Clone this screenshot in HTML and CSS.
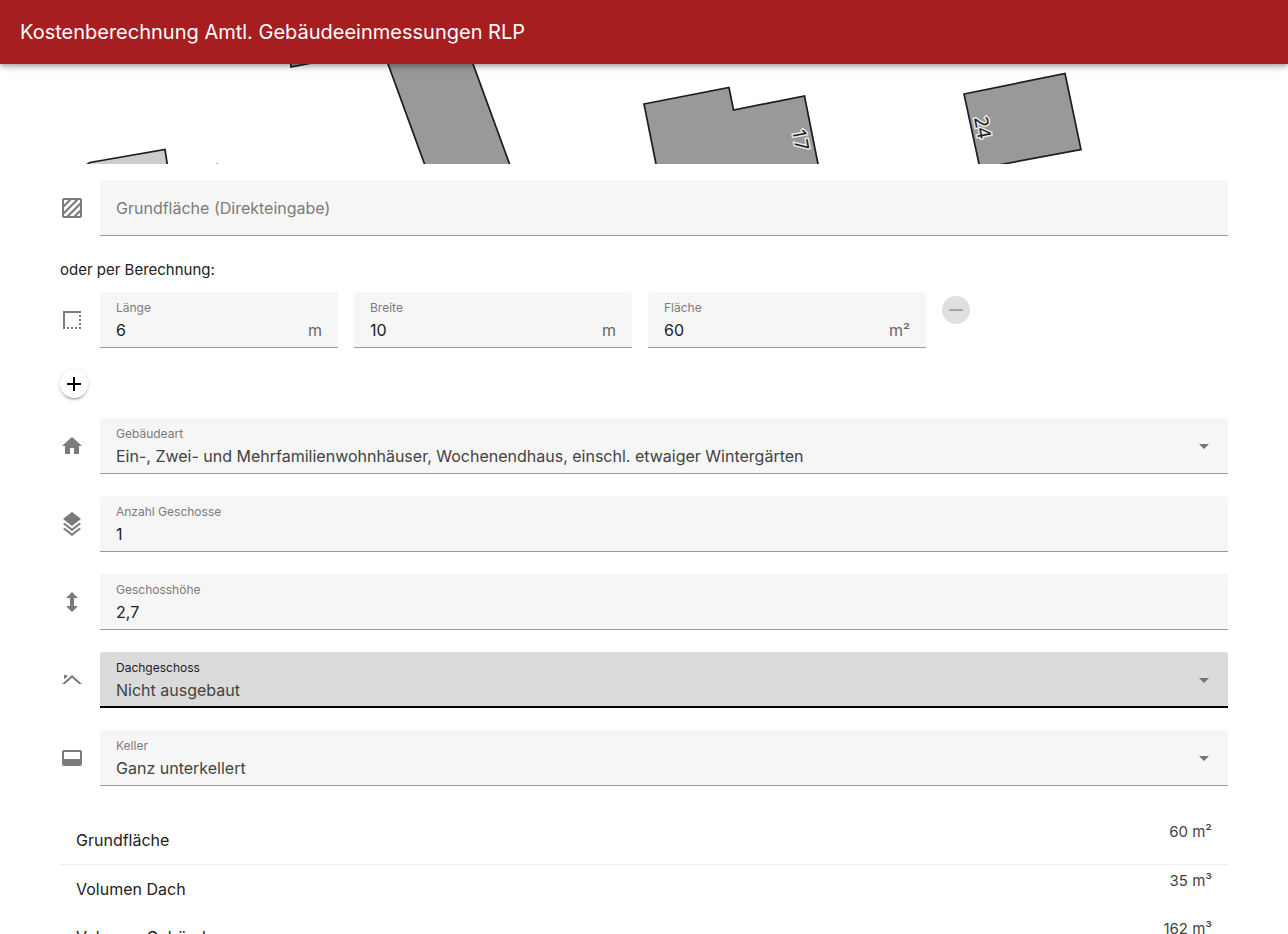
FILE: index.html
```html
<!DOCTYPE html>
<html lang="de">
<head>
<meta charset="utf-8">
<meta name="viewport" content="width=device-width, initial-scale=1">
<title>Kostenberechnung Amtl. Gebäudeeinmessungen RLP</title>
<link rel="stylesheet" href="styles.css">
</head>
<body>
<div class="app">
<header class="app-bar"><h1 class="app-title">Kostenberechnung Amtl. Gebäudeeinmessungen RLP</h1></header>
<main class="content">
  <svg class="map" viewBox="0 0 1168 100" preserveAspectRatio="xMinYMin slice" role="img" aria-label="Lageplan">
    <g fill="#999" stroke="#1c1c1c" stroke-width="1.7">
      <path d="M230-10 231 3 262-3V-10Z"/>
      <path d="M324-11 366 104H451L409-11Z"/>
      <path d="M584 40 669 23.500 673.500 46 744.500 32 759 105H597Z"/>
      <path d="M904 30 1005 9.500 1021 85.500 920 104.500Z"/>
      <path fill="#ccc" d="M20 105 30 98.500 105 85.500 108 105H20Z"/>
    </g>
    <path d="M156 99.500h2" stroke="#aaa"/>
    <g class="map-label">
      <text transform="translate(732 66) rotate(79)">17</text>
      <text transform="translate(914 54) rotate(79)">24</text>
    </g>
  </svg>
  <form class="form">
    <div class="row">
      <svg class="icon" viewBox="0 0 24 24" aria-hidden="true"><path d="M4 2C2.900 2 2 2.900 2 4V20C2 21.110 2.900 22 4 22H20C21.110 22 22 21.110 22 20V4C22 2.900 21.110 2 20 2H4M4 4H8.500L4 8.500V4M11.500 4H15.500L4 15.500V11.500L11.500 4M18.500 4H20V6.500L6.500 20H4V18.500L18.500 4M20 9.500V13.500L13.500 20H9.500L20 9.500M20 16.500V20H16.500L20 16.500Z"/></svg>
      <div class="field"><input class="control control-plain" type="text" aria-label="Grundfläche (Direkteingabe)" placeholder="Grundfläche (Direkteingabe)"></div>
    </div>
    <p class="hint">oder per Berechnung:</p>
    <div class="dimensions">
      <div class="row">
        <svg class="icon" viewBox="0 0 24 24" aria-hidden="true"><path d="M15 21H17V19H15M19 21H21V19H19M7 21H9V19H7M11 21H13V19H11M19 17H21V15H19M19 13H21V11H19M3 3V21H5V5H21V3M19 9H21V7H19"/></svg>
        <div class="field"><label class="label" for="laenge">Länge</label><input class="control" id="laenge" type="text" value="6"><span class="unit">m</span></div>
      </div>
      <div class="field"><label class="label" for="breite">Breite</label><input class="control" id="breite" type="text" value="10"><span class="unit">m</span></div>
      <div class="field"><label class="label" for="flaeche">Fläche</label><input class="control" id="flaeche" type="text" value="60" readonly><span class="unit">m²</span></div>
      <button class="fab fab-disabled" type="button" aria-label="Entfernen" disabled><svg viewBox="0 0 24 24" aria-hidden="true"><path d="M19 13H5V11H19V13Z"/></svg></button>
    </div>
    <button class="fab fab-add" type="button" aria-label="Hinzufügen"><svg viewBox="0 0 24 24" aria-hidden="true"><path d="M19 13H13V19H11V13H5V11H11V5H13V11H19V13Z"/></svg></button>
    <div class="row">
      <svg class="icon" viewBox="0 0 24 24" aria-hidden="true"><path d="M10 20V14H14V20H19V12H22L12 3L2 12H5V20H10Z"/></svg>
      <div class="field field-select"><label class="label" for="art">Gebäudeart</label><select class="control" id="art"><option>Ein-, Zwei- und Mehrfamilienwohnhäuser, Wochenendhaus, einschl. etwaiger Wintergärten</option></select></div>
    </div>
    <div class="row">
      <svg class="icon" viewBox="0 0 24 24" aria-hidden="true"><path d="M12 0L3 7L4.630 8.270L12 14L19.360 8.270L21 7L12 0M19.370 10.730L12 16.470L4.620 10.740L3 12L12 19L21 12L19.370 10.730M19.370 15.730L12 21.470L4.620 15.740L3 17L12 24L21 17L19.370 15.730Z"/></svg>
      <div class="field"><label class="label" for="geschosse">Anzahl Geschosse</label><input class="control" id="geschosse" type="text" value="1"></div>
    </div>
    <div class="row">
      <svg class="icon" viewBox="0 0 24 24" aria-hidden="true"><path d="M12 2L6 8H10V16H6L12 22L18 16H14V8H18L12 2Z"/></svg>
      <div class="field"><label class="label" for="hoehe">Geschosshöhe</label><input class="control" id="hoehe" type="text" value="2,7"></div>
    </div>
    <div class="row">
      <svg class="icon" viewBox="0 0 24 24" aria-hidden="true"><path d="M19 16H22L12 7L2 16H5L12 9.690L19 16M7 8.810V7H4V11.500L7 8.810Z"/></svg>
      <div class="field field-select field-active"><label class="label" for="dach">Dachgeschoss</label><select class="control" id="dach"><option>Nicht ausgebaut</option></select></div>
    </div>
    <div class="row">
      <svg class="icon" viewBox="0 0 24 24" aria-hidden="true"><path d="M20 4H4A2 2 0 0 0 2 6V18A2 2 0 0 0 4 20H20A2 2 0 0 0 22 18V6A2 2 0 0 0 20 4M20 13H4V6H20V13Z"/></svg>
      <div class="field field-select"><label class="label" for="keller">Keller</label><select class="control" id="keller"><option>Ganz unterkellert</option></select></div>
    </div>
  </form>
  <dl class="results">
    <div class="result"><dt>Grundfläche</dt><dd>60 m²</dd></div>
    <div class="result result-divided"><dt>Volumen Dach</dt><dd>35 m³</dd></div>
    <div class="result"><dt>Volumen Gebäude</dt><dd>162 m³</dd></div>
  </dl>
</main>
</div>
</body>
</html>
```
FILE: styles.css
```css
* { box-sizing: border-box; }
body { margin: 0; background: #fff; color: #212121; font: 16px/24px Inter, "Liberation Sans", sans-serif; }
.app { display: flex; flex-direction: column; height: 100vh; overflow: hidden; }
.app-bar { position: relative; z-index: 1; display: flex; flex: none; align-items: center; height: 64px; padding: 0 20px; background: #a61e20; color: #fff; box-shadow: 0 2px 4px -1px rgba(0,0,0,.2), 0 4px 5px rgba(0,0,0,.14), 0 1px 10px rgba(0,0,0,.12); }
.app-title { margin: 0; font-size: 20px; font-weight: 400; line-height: 32px; }
.content { flex: 1; min-height: 0; overflow-y: auto; padding: 0 60px 24px; scrollbar-width: none; }
.map { display: block; width: 100%; height: 100px; margin-bottom: 16px; }
.map-label { fill: #1c1c1c; stroke: #e8e8e8; stroke-width: 3px; paint-order: stroke; font: 19px "Noto Sans", sans-serif; }
.form { display: flex; flex-direction: column; gap: 22px; }
.row { display: flex; align-items: center; gap: 16px; min-width: 0; }
.icon { flex: none; width: 24px; height: 24px; fill: #7b7b7b; }
.field { position: relative; flex: 1; min-width: 0; height: 56px; overflow: hidden; border-bottom: 1px solid #9b9b9b; border-radius: 4px 4px 0 0; background: #f6f6f6; }
.label { position: absolute; top: 8px; left: 16px; color: #7b7b7b; font-size: 12px; line-height: 16px; pointer-events: none; }
.control { display: block; width: 100%; height: 55px; margin: 0; padding: 22px 16px 2px; border: 0; outline: 0; appearance: none; background: transparent; color: #212121; font: inherit; }
.control-plain { padding: 1px 16px 0; }
.control::placeholder { color: #7b7b7b; opacity: 1; }
.field-select .control { padding-right: 48px; color: #424242; }
.field-select::after { position: absolute; top: 26px; right: 19px; border: 5px solid transparent; border-top-color: #757575; border-bottom: 0; content: ""; pointer-events: none; }
.field-active { border-bottom: 2px solid #000; background: #dbdbdb; }
.field-active .label { color: #212121; }
.unit { position: absolute; top: 26px; right: 16px; color: #666; }
.hint { margin: 0 0 -12px; font-size: 15px; line-height: 24px; }
.dimensions { display: grid; grid-template-columns: repeat(4, minmax(0, 1fr)); gap: 16px; padding-right: 8px; }
.fab { display: grid; place-items: center; width: 28px; height: 28px; padding: 0; border: 0; border-radius: 50%; background: #fff; color: #000; }
.fab svg { width: 24px; height: 24px; fill: currentColor; }
.fab-add { margin-bottom: -2px; box-shadow: 0 3px 1px -2px rgba(0,0,0,.2), 0 2px 2px rgba(0,0,0,.14), 0 1px 5px rgba(0,0,0,.12); }
.fab-disabled { margin-top: 4px; background: #e0e0e0; color: #a6a6a6; }
.results { margin: 30px 0 0; }
.result { display: flex; justify-content: space-between; height: 48px; padding: 0 16px; }
.result-divided { height: 49px; border-top: 1px solid #eee; }
.result dt { line-height: 48px; }
.result dd { margin: 0; padding-top: 4px; color: #424242; font-size: 15px; }
```
